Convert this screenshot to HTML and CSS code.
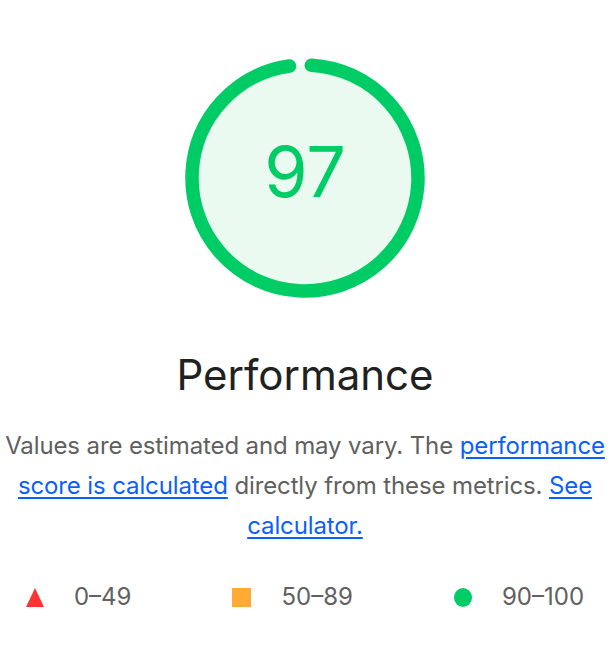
FILE: index.html
```html
<!DOCTYPE html>
<html lang="en">
<head>
<meta charset="utf-8">
<title>Performance</title>
<link rel="stylesheet" href="styles.css">
</head>
<body>
<main class="report">
  <div class="gauge">
    <svg class="gauge-svg" width="240" height="240" viewBox="0 0 240 240" aria-hidden="true">
      <circle class="gauge-base" cx="120" cy="120" r="113"></circle>
      <circle class="gauge-arc" cx="120" cy="120" r="113"></circle>
    </svg>
    <div class="gauge-score">97</div>
  </div>
  <h1 class="title">Performance</h1>
  <p class="desc">Values are estimated and may vary. The <a href="#">performance score is calculated</a> directly from these metrics. <a href="#">See calculator.</a></p>
  <div class="scale">
    <span class="scale-item"><span class="icon tri"></span>0–49</span>
    <span class="scale-item"><span class="icon sq"></span>50–89</span>
    <span class="scale-item"><span class="icon dot"></span>90–100</span>
  </div>
</main>
</body>
</html>
```
FILE: styles.css
```css
html, body {
  margin: 0;
  padding: 0;
  background: #ffffff;
}
body {
  font-family: Inter, Roboto, "Liberation Sans", sans-serif;
  color: #212121;
}
.report {
  width: 610px;
  display: flex;
  flex-direction: column;
  align-items: center;
  padding-top: 58px;
}
.gauge {
  position: relative;
  width: 240px;
  height: 240px;
}
.gauge-svg {
  display: block;
}
.gauge-base {
  fill: #ebfaf0;
  stroke: none;
}
.gauge-arc {
  fill: none;
  stroke: #00cc66;
  stroke-width: 13.5;
  stroke-linecap: round;
  stroke-dasharray: 687.5 710;
  transform-origin: 120px 120px;
  transform: rotate(-86.8deg);
}
.gauge-score {
  position: absolute;
  left: 0;
  right: 0;
  top: 74px;
  text-align: center;
  font-size: 70px;
  line-height: 80px;
  color: #00cc66;
}
.title {
  margin: 51px 0 0;
  font-size: 42px;
  line-height: 52px;
  font-weight: 400;
  color: #212121;
}
.desc {
  margin: 25px -3px 0;
  padding: 0;
  text-align: center;
  font-size: 24px;
  letter-spacing: -0.12px;
  line-height: 40px;
  color: #5f5f5f;
}
.desc a {
  color: #0a5fff;
  text-decoration: underline;
  text-underline-offset: 3px;
}
.scale {
  display: flex;
  justify-content: center;
  gap: 101px;
  margin-top: 35px;
  font-size: 24px;
  line-height: 32px;
  color: #616161;
}
.scale-item {
  display: flex;
  align-items: center;
  gap: 30px;
}
.icon {
  display: block;
  width: 18px;
  height: 18px;
}
.tri {
  width: 0;
  height: 0;
  border-left: 9px solid transparent;
  border-right: 9px solid transparent;
  border-bottom: 19px solid #ff3333;
}
.sq {
  width: 19px;
  height: 19px;
  background: #ffaa33;
}
.dot {
  width: 18px;
  height: 19px;
  border-radius: 50%;
  background: #00cc66;
}
```
